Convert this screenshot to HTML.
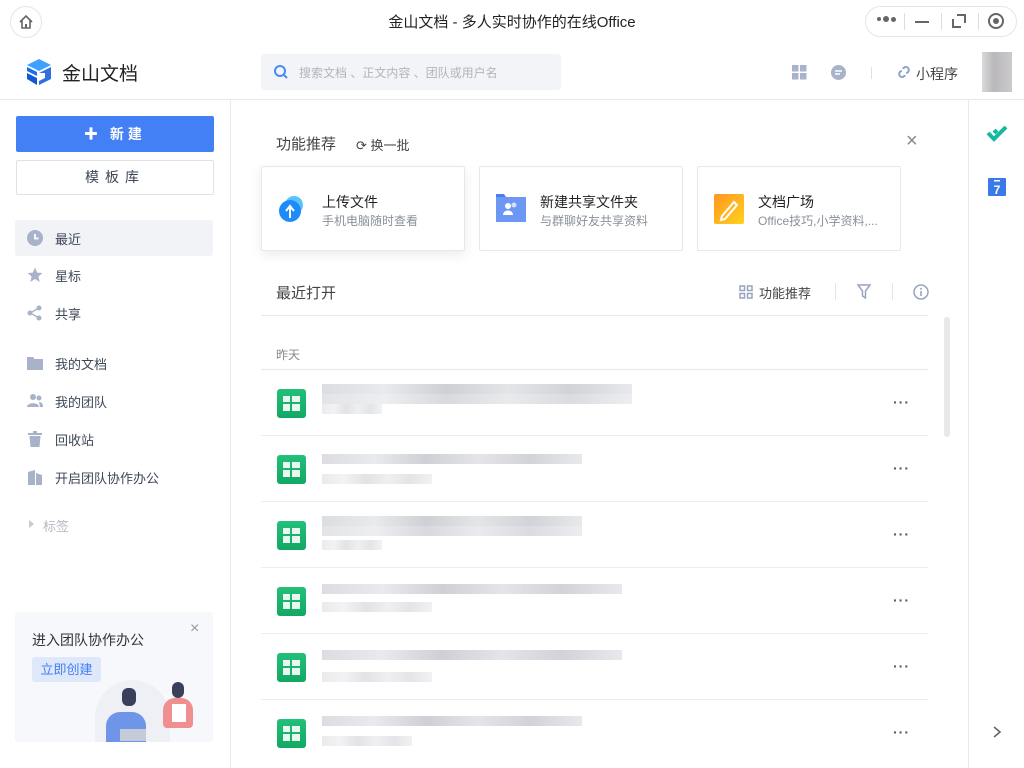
<!DOCTYPE html>
<html><head><meta charset="utf-8"><style>
*{margin:0;padding:0;box-sizing:border-box}
body{width:1024px;height:768px;overflow:hidden;background:#fff;font-family:"Liberation Sans","Noto Sans CJK SC",sans-serif;color:#333;position:relative}
.a{position:absolute}
.nav{position:absolute;left:15px;width:198px;height:36px;display:flex;align-items:center;font-size:13px;color:#3d4757}
.nav svg{position:absolute;left:12px}
.nav span{position:absolute;left:40px}
.card{position:absolute;top:166px;width:204px;height:85px;border:1px solid #e6e8eb;border-radius:2px;background:#fff}
.card .t{position:absolute;left:60px;top:25px;font-size:14px;color:#222}
.card .s{position:absolute;left:60px;top:45px;font-size:12px;color:#8a9099}
.row{position:absolute;left:261px;width:667px;height:66px;border-bottom:1px solid #eceef1}
.ic{position:absolute;left:16px;top:19px;width:29px;height:29px;border-radius:3px;background:linear-gradient(#23c07a,#12a863)}
.ic i{position:absolute;background:#fff;opacity:.9}
.dots{position:absolute;right:18px;top:24px;font-size:14px;color:#555;letter-spacing:1px;font-weight:bold}
.blur{position:absolute;left:61px;height:10px;background:linear-gradient(90deg,#dcdde1,#e9eaed 20%,#cfd0d5 40%,#e4e5e8 60%,#d2d3d8 80%,#e8e9ec)}
</style></head><body>
<!-- title bar -->
<div class="a" style="left:10px;top:6px;width:32px;height:32px;border:1px solid #e5e5e5;border-radius:50%"></div>
<svg class="a" style="left:17px;top:13px" width="18" height="18" viewBox="0 0 18 18"><path d="M3 9 L9 3 L15 9 M5 7.5 V15 H13 V7.5" fill="none" stroke="#666" stroke-width="1.6"/><rect x="8" y="11" width="2" height="4" fill="#666"/></svg>
<div class="a" style="left:0;width:1024px;top:11px;text-align:center;font-size:15px;color:#222">金山文档 - 多人实时协作的在线Office</div>
<div class="a" style="left:865px;top:6px;width:152px;height:31px;border:1px solid #e5e5e5;border-radius:16px"></div>
<div class="a" style="left:877px;top:17px;width:4px;height:4px;border-radius:50%;background:#666"></div>
<div class="a" style="left:883px;top:16px;width:6px;height:6px;border-radius:50%;background:#666"></div>
<div class="a" style="left:891px;top:17px;width:5px;height:5px;border-radius:50%;background:#666"></div>
<div class="a" style="left:904px;top:13px;width:1px;height:17px;background:#ddd"></div>
<div class="a" style="left:915px;top:21px;width:14px;height:2px;background:#666"></div>
<div class="a" style="left:941px;top:13px;width:1px;height:17px;background:#ddd"></div>
<svg class="a" style="left:952px;top:14px" width="14" height="14"><path d="M5 1H13V9 M9 13H1V5" fill="none" stroke="#666" stroke-width="2"/></svg>
<div class="a" style="left:978px;top:13px;width:1px;height:17px;background:#ddd"></div>
<div class="a" style="left:988px;top:13px;width:16px;height:16px;border:2px solid #666;border-radius:50%"></div>
<div class="a" style="left:993px;top:18px;width:6px;height:6px;background:#666;border-radius:50%"></div>
<!-- header -->
<svg class="a" style="left:26px;top:58px" width="26" height="28" viewBox="0 0 26 28"><path d="M13 1 L25 7 L13 13 L1 7Z" fill="#3fa0ff"/><path d="M1 9 L11 14 V18 L1 13Z" fill="#1a6fe8"/><path d="M13 15 L25 9 V21 L13 27 V23 L19 20 V15Z" fill="#2f6fe0"/><path d="M1 15 L11 20 V27 L1 21Z" fill="#1557d6"/></svg>
<div class="a" style="left:62px;top:59px;font-size:19px;color:#222">金山文档</div>
<div class="a" style="left:261px;top:54px;width:300px;height:36px;background:#f2f4f7;border-radius:3px"></div>
<svg class="a" style="left:273px;top:64px" width="16" height="16"><circle cx="7" cy="7" r="5" fill="none" stroke="#4a8bf5" stroke-width="2"/><path d="M11 11 L14 14" stroke="#4a8bf5" stroke-width="2"/></svg>
<div class="a" style="left:299px;top:64px;font-size:12px;color:#b0b5bd">搜索文档 、正文内容 、团队或用户名</div>
<svg class="a" style="left:792px;top:65px" width="15" height="15"><rect x="0" y="0" width="6.5" height="6.5" fill="#a8b3c9"/><rect x="8" y="0" width="6.5" height="6.5" fill="#a8b3c9"/><rect x="0" y="8" width="6.5" height="6.5" fill="#a8b3c9"/><rect x="8" y="8" width="6.5" height="6.5" fill="#a8b3c9"/></svg>
<svg class="a" style="left:830px;top:64px" width="17" height="17"><circle cx="8.5" cy="8.5" r="7.5" fill="#a8b3c9"/><path d="M5 7H12 M5 10H10" stroke="#fff" stroke-width="1.4"/></svg>
<div class="a" style="left:871px;top:67px;width:1px;height:12px;background:#e0e0e0"></div>
<svg class="a" style="left:896px;top:64px" width="16" height="16"><path d="M7 5 A3 3 0 1 1 10 9 M9 11 A3 3 0 1 1 6 7" fill="none" stroke="#8fa3cc" stroke-width="2"/></svg>
<div class="a" style="left:916px;top:64px;font-size:14px;color:#444">小程序</div>
<div class="a" style="left:982px;top:52px;width:30px;height:40px;background:linear-gradient(90deg,#cfcfd2,#a9a6a8 40%,#bdbdc0);opacity:.8"></div>
<div class="a" style="left:0;top:99px;width:1024px;height:1px;background:#e8e8e8"></div>
<!-- sidebar -->
<div class="a" style="left:230px;top:100px;width:1px;height:668px;background:#eaeaea"></div>
<div class="a" style="left:16px;top:116px;width:198px;height:36px;background:#437ff5;border-radius:2px;color:#fff;font-size:14px;font-weight:bold;text-align:center;line-height:36px;letter-spacing:4px">✚ 新建</div>
<div class="a" style="left:16px;top:160px;width:198px;height:35px;border:1px solid #dfe1e5;border-radius:2px;color:#3d4757;font-size:14px;text-align:center;line-height:33px;letter-spacing:6px">模板库</div>
<div class="nav" style="top:220px;background:#f1f3f7;border-radius:3px"><svg width="16" height="16"><circle cx="8" cy="8" r="8" fill="#a8b3c9"/><path d="M8 4V8.5H11.5" stroke="#fff" stroke-width="1.8" fill="none"/></svg><span>最近</span></div>
<div class="nav" style="top:257px"><svg width="16" height="16"><path d="M8 0.5L10.2 5.6 15.5 6 11.4 9.5 12.7 15 8 12 3.3 15 4.6 9.5 0.5 6 5.8 5.6Z" fill="#a8b3c9"/></svg><span>星标</span></div>
<div class="nav" style="top:295px"><svg width="16" height="16"><circle cx="12" cy="3" r="2.5" fill="#a8b3c9"/><circle cx="12" cy="13" r="2.5" fill="#a8b3c9"/><circle cx="3" cy="8" r="2.5" fill="#a8b3c9"/><path d="M12 3L3 8 12 13" stroke="#a8b3c9" stroke-width="1.3" fill="none"/></svg><span>共享</span></div>
<div class="nav" style="top:345px"><svg width="16" height="16"><path d="M0 2H6L7.5 4H16V15H0Z" fill="#a8b3c9"/></svg><span>我的文档</span></div>
<div class="nav" style="top:383px"><svg width="16" height="16"><circle cx="6" cy="4" r="3" fill="#a8b3c9"/><circle cx="12" cy="5" r="2.5" fill="#a8b3c9"/><path d="M0 14C0 9 12 9 12 14Z M12 9C15 9 16 11 16 14H13Z" fill="#a8b3c9"/></svg><span>我的团队</span></div>
<div class="nav" style="top:421px"><svg width="16" height="16"><rect x="1" y="2" width="14" height="2" fill="#a8b3c9"/><rect x="6" y="0" width="4" height="2" fill="#a8b3c9"/><path d="M2.5 5H13.5L12.5 16H3.5Z" fill="#a8b3c9"/></svg><span>回收站</span></div>
<div class="nav" style="top:459px"><svg width="16" height="16"><path d="M1 3L8 1V16H1Z M9 4L15 6V16H9Z" fill="#a8b3c9"/></svg><span>开启团队协作办公</span></div>
<div class="a" style="left:29px;top:520px;width:0;height:0;border-left:5px solid #c5cad3;border-top:4px solid transparent;border-bottom:4px solid transparent"></div>
<div class="a" style="left:43px;top:516px;font-size:13px;color:#b5bac2">标签</div>
<div class="a" style="left:15px;top:612px;width:198px;height:130px;background:#f6f8fc;border-radius:3px"></div>
<div class="a" style="left:32px;top:630px;font-size:14px;color:#333">进入团队协作办公</div>
<div class="a" style="left:190px;top:620px;font-size:16px;color:#999">×</div>
<div class="a" style="left:32px;top:657px;width:69px;height:25px;background:#dfe7fb;border-radius:3px;color:#437ff5;font-size:13px;text-align:center;line-height:25px">立即创建</div>
<div class="a" style="left:95px;top:680px;width:75px;height:62px;background:#eef0f5;border-radius:40px 40px 0 0"></div>
<div class="a" style="left:106px;top:712px;width:40px;height:30px;background:#6e95e8;border-radius:14px 14px 0 0"></div>
<div class="a" style="left:122px;top:688px;width:14px;height:18px;background:#3a3f5c;border-radius:6px"></div>
<div class="a" style="left:120px;top:729px;width:26px;height:12px;background:#c5cbd8"></div>
<div class="a" style="left:163px;top:698px;width:30px;height:30px;background:#f08f8f;border-radius:12px 12px 4px 4px"></div>
<div class="a" style="left:172px;top:682px;width:12px;height:16px;background:#3a3f5c;border-radius:6px"></div>
<div class="a" style="left:172px;top:704px;width:14px;height:18px;background:#fff"></div>
<!-- main -->
<div class="a" style="left:276px;top:133px;font-size:15px;color:#444">功能推荐</div>
<div class="a" style="left:356px;top:135px;font-size:13px;color:#444">⟳ 换一批</div>
<div class="a" style="left:906px;top:130px;font-size:20px;color:#888;font-weight:300">×</div>
<div class="card" style="left:261px;box-shadow:0 4px 12px rgba(0,0,0,.08)"><svg class="a" style="left:15px;top:27px" width="30" height="30"><circle cx="17" cy="11" r="9" fill="#59c3ff"/><circle cx="13" cy="17" r="11" fill="#1d8cf8"/><path d="M13 24V13 M9 17L13 12 17 17" stroke="#fff" stroke-width="2" fill="none"/></svg><div class="t">上传文件</div><div class="s">手机电脑随时查看</div></div>
<div class="card" style="left:479px"><svg class="a" style="left:16px;top:27px" width="30" height="30"><path d="M0 0H8L10 3H30V28H0Z" fill="#4a7ef0"/><rect x="0" y="3" width="30" height="25" fill="#6d97f5"/><circle cx="12" cy="12" r="3" fill="#fff"/><circle cx="18" cy="11" r="2.5" fill="#fff" opacity=".7"/><path d="M7 21C7 15 17 15 17 21Z" fill="#fff"/></svg><div class="t">新建共享文件夹</div><div class="s">与群聊好友共享资料</div></div>
<div class="card" style="left:697px"><svg class="a" style="left:16px;top:27px" width="30" height="30"><defs><linearGradient id="g" x1="0" y1="0" x2="1" y2="1"><stop offset="0" stop-color="#ff9520"/><stop offset="1" stop-color="#ffd21e"/></linearGradient></defs><rect width="30" height="30" rx="2" fill="url(#g)"/><path d="M8 22L20 8 23 11 11 25 7 26Z" fill="none" stroke="#fff" stroke-width="2"/></svg><div class="t">文档广场</div><div class="s">Office技巧,小学资料,...</div></div>
<div class="a" style="left:276px;top:282px;font-size:15px;color:#444">最近打开</div>
<svg class="a" style="left:739px;top:285px" width="14" height="14"><g fill="none" stroke="#98a4bd" stroke-width="1.5"><rect x="1" y="1" width="4.5" height="4.5"/><rect x="8.5" y="1" width="4.5" height="4.5"/><rect x="1" y="8.5" width="4.5" height="4.5"/><rect x="8.5" y="8.5" width="4.5" height="4.5"/></g></svg>
<div class="a" style="left:759px;top:283px;font-size:13px;color:#444">功能推荐</div>
<div class="a" style="left:835px;top:283px;width:1px;height:17px;background:#e5e5e5"></div>
<svg class="a" style="left:857px;top:284px" width="14" height="15"><path d="M1 1H13L8.5 7V14L5.5 12V7Z" fill="none" stroke="#98a4bd" stroke-width="1.5"/></svg>
<div class="a" style="left:892px;top:283px;width:1px;height:17px;background:#e5e5e5"></div>
<svg class="a" style="left:913px;top:284px" width="16" height="16"><circle cx="8" cy="8" r="7" fill="none" stroke="#98a4bd" stroke-width="1.5"/><rect x="7.2" y="7" width="1.6" height="5" fill="#98a4bd"/><circle cx="8" cy="4.8" r="1" fill="#98a4bd"/></svg>
<div class="a" style="left:261px;top:315px;width:667px;height:1px;background:#e6e8eb"></div>
<div class="a" style="left:944px;top:317px;width:6px;height:120px;background:#e8e8e8;border-radius:3px"></div>
<div class="a" style="left:276px;top:346px;font-size:12px;color:#888">昨天</div>
<div class="a" style="left:261px;top:369px;width:667px;height:1px;background:#e6e8eb"></div>
<div class="row" style="top:370px"><div class="ic"><i style="left:6px;top:7px;width:7px;height:6px"></i><i style="left:15px;top:7px;width:8px;height:6px"></i><i style="left:6px;top:15px;width:7px;height:7px"></i><i style="left:15px;top:15px;width:8px;height:7px"></i></div><div class="blur" style="top:14px;width:310px"></div><div class="blur" style="top:24px;width:310px;opacity:.8"></div><div class="blur" style="top:34px;width:60px;opacity:.6"></div><div class="dots">···</div></div>
<div class="row" style="top:436px"><div class="ic"><i style="left:6px;top:7px;width:7px;height:6px"></i><i style="left:15px;top:7px;width:8px;height:6px"></i><i style="left:6px;top:15px;width:7px;height:7px"></i><i style="left:15px;top:15px;width:8px;height:7px"></i></div><div class="blur" style="top:18px;width:260px"></div><div class="blur" style="top:38px;width:110px;opacity:.6"></div><div class="dots">···</div></div>
<div class="row" style="top:502px"><div class="ic"><i style="left:6px;top:7px;width:7px;height:6px"></i><i style="left:15px;top:7px;width:8px;height:6px"></i><i style="left:6px;top:15px;width:7px;height:7px"></i><i style="left:15px;top:15px;width:8px;height:7px"></i></div><div class="blur" style="top:14px;width:260px"></div><div class="blur" style="top:24px;width:260px;opacity:.8"></div><div class="blur" style="top:38px;width:60px;opacity:.6"></div><div class="dots">···</div></div>
<div class="row" style="top:568px"><div class="ic"><i style="left:6px;top:7px;width:7px;height:6px"></i><i style="left:15px;top:7px;width:8px;height:6px"></i><i style="left:6px;top:15px;width:7px;height:7px"></i><i style="left:15px;top:15px;width:8px;height:7px"></i></div><div class="blur" style="top:16px;width:300px"></div><div class="blur" style="top:34px;width:110px;opacity:.6"></div><div class="dots">···</div></div>
<div class="row" style="top:634px"><div class="ic"><i style="left:6px;top:7px;width:7px;height:6px"></i><i style="left:15px;top:7px;width:8px;height:6px"></i><i style="left:6px;top:15px;width:7px;height:7px"></i><i style="left:15px;top:15px;width:8px;height:7px"></i></div><div class="blur" style="top:16px;width:300px"></div><div class="blur" style="top:38px;width:110px;opacity:.6"></div><div class="dots">···</div></div>
<div class="row" style="top:700px;border:none"><div class="ic"><i style="left:6px;top:7px;width:7px;height:6px"></i><i style="left:15px;top:7px;width:8px;height:6px"></i><i style="left:6px;top:15px;width:7px;height:7px"></i><i style="left:15px;top:15px;width:8px;height:7px"></i></div><div class="blur" style="top:16px;width:260px"></div><div class="blur" style="top:36px;width:90px;opacity:.6"></div><div class="dots">···</div></div>
<!-- right panel -->
<div class="a" style="left:968px;top:100px;width:1px;height:668px;background:#eaeaea"></div>
<svg class="a" style="left:986px;top:124px" width="22" height="18"><path d="M2 9L8 15 20 3 M8 9L11 6" fill="none" stroke="#16b8a0" stroke-width="4"/></svg>
<svg class="a" style="left:988px;top:176px" width="18" height="20"><rect y="2" width="18" height="18" rx="1" fill="#3b78e8"/><rect x="6" y="4" width="6" height="1.5" fill="#fff"/><text x="9" y="18" font-size="12" font-weight="bold" fill="#fff" text-anchor="middle" font-family="Liberation Sans">7</text></svg>
<svg class="a" style="left:992px;top:725px" width="10" height="14"><path d="M2 2L8 7 2 12" fill="none" stroke="#666" stroke-width="1.6"/></svg>
</body></html>
